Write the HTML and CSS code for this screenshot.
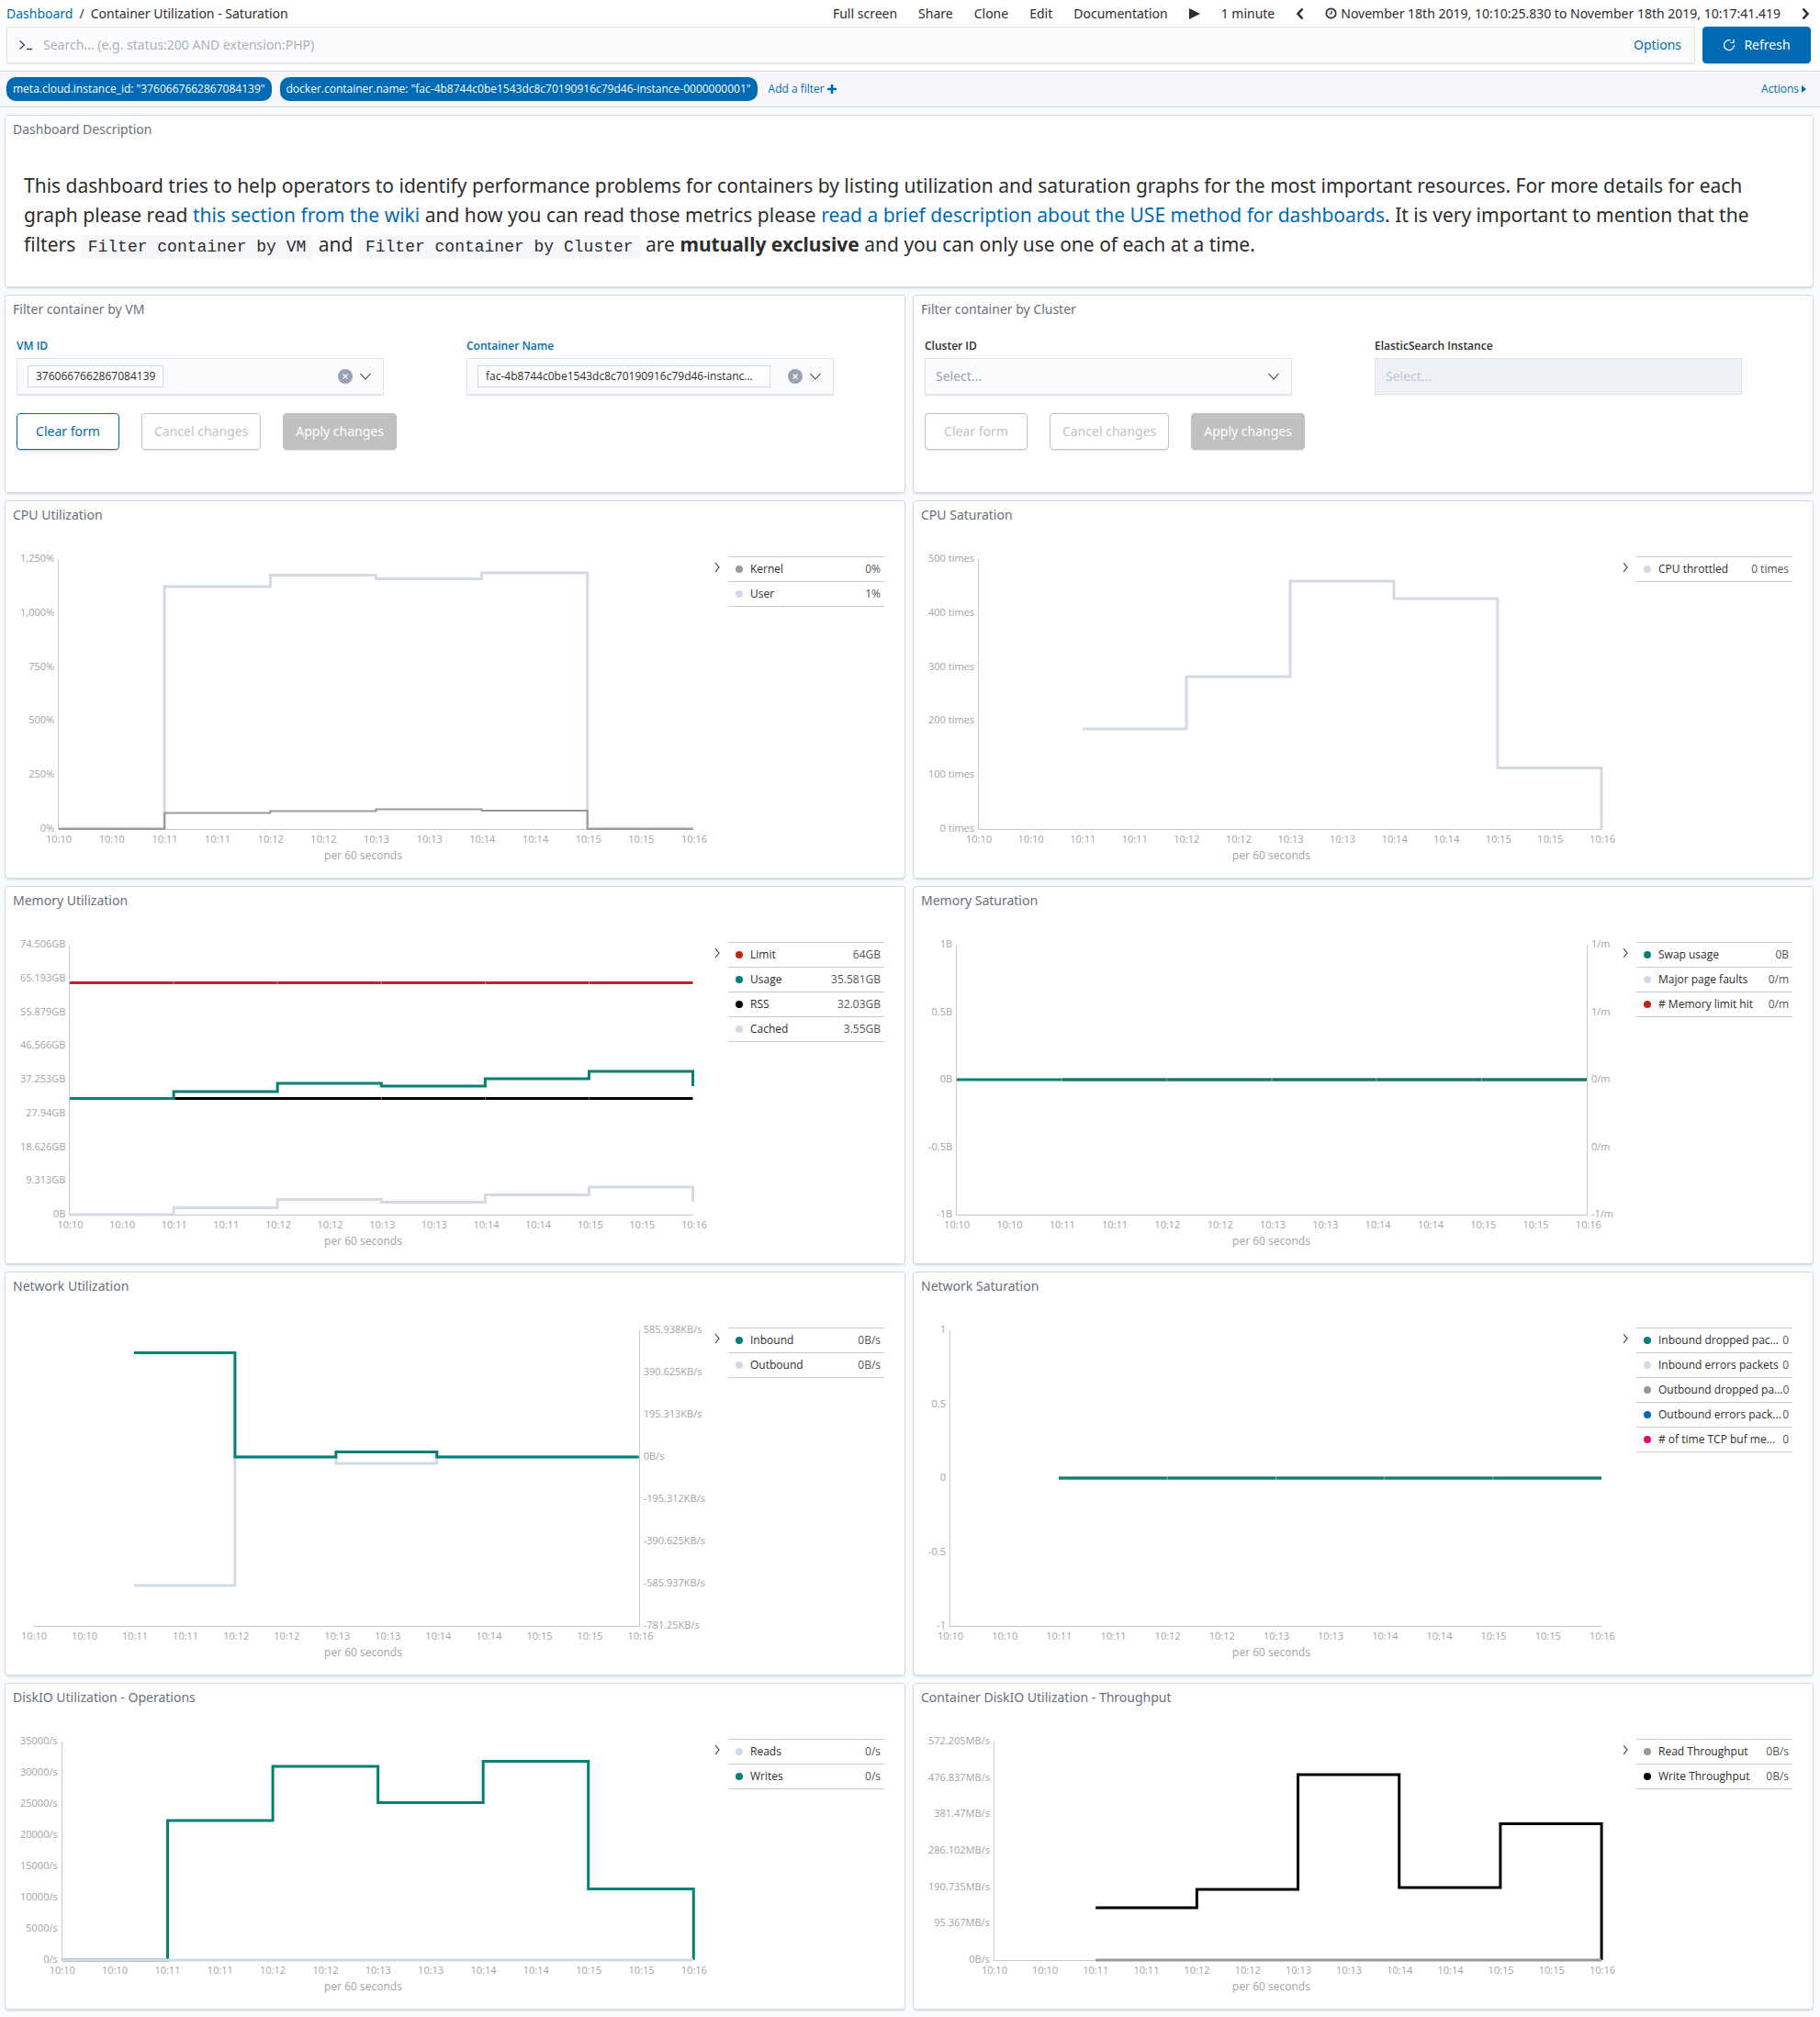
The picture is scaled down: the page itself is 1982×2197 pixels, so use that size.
FILE: index.html
```html
<!DOCTYPE html>
<html lang="en">
<head>
<meta charset="utf-8">
<title>Container Utilization - Saturation</title>
<link rel="stylesheet" href="styles.css">
</head>
<body>
<svg class="sprite" aria-hidden="true">
  <symbol id="i-down" viewBox="0 0 16 16"><path d="M2.500 5l5.500 6 5.500-6" fill="none" stroke="currentColor" stroke-width="1.100"/></symbol>
  <symbol id="i-next" viewBox="0 0 16 16"><path d="M6 3l4 5-4 5" fill="none" stroke="currentColor" stroke-width="1.100"/></symbol>
  <symbol id="i-clear" viewBox="0 0 16 16"><circle cx="8" cy="8" r="8" fill="#98a2b3"/><path d="M5.500 5.500l5 5m0-5l-5 5" stroke="#fff" stroke-width="1.200"/></symbol>
</svg>

<header class="topbar">
  <nav class="crumbs" aria-label="Breadcrumb"><a href="#">Dashboard</a><span>/</span><span>Container Utilization - Saturation</span></nav>
  <div class="menu">
    <button>Full screen</button>
    <button>Share</button>
    <button>Clone</button>
    <button>Edit</button>
    <button>Documentation</button>
    <button aria-label="Start auto refresh"><svg width="12" height="14" viewBox="0 0 12 14"><path d="M0 1l12 6-12 6z" fill="currentColor"/></svg></button>
    <button>1 minute</button>
    <button aria-label="Earlier"><svg width="9" height="14" viewBox="0 0 9 14"><path d="M7.500 1.500L2.500 7l5 5.500" fill="none" stroke="currentColor" stroke-width="2.600"/></svg></button>
    <button class="range"><svg width="13" height="13" viewBox="0 0 13 13" fill="none" stroke="currentColor"><circle cx="6.500" cy="6.500" r="5.200" stroke-width="1.700"/><path d="M7 3.500V7H4.500" stroke-width="1.200"/></svg>November 18th 2019, 10:10:25.830 to November 18th 2019, 10:17:41.419</button>
    <button aria-label="Later"><svg width="9" height="14" viewBox="0 0 9 14"><path d="M1.500 1.500l5 5.500-5 5.500" fill="none" stroke="currentColor" stroke-width="2.600"/></svg></button>
  </div>
</header>

<form class="query">
  <div class="query-box">
    <svg width="16" height="16" viewBox="0 0 16 16" fill="none" stroke="#343741"><path d="M1.500 3.500l5 4.500-5 4.500" stroke-width="1.200"/><path d="M9 12.500h6" stroke-width="1.400"/></svg>
    <input type="text" aria-label="Search" placeholder="Search... (e.g. status:200 AND extension:PHP)">
    <a href="#">Options</a>
  </div>
  <button type="button" class="btn btn-fill btn-refresh"><svg width="14" height="14" viewBox="0 0 14 14" fill="none" stroke="currentColor" stroke-width="1.200"><path d="M8.500 1.800A5.500 5.500 0 1 0 12.500 7M12 1v3.500H8.500"/></svg>Refresh</button>
</form>

<div class="filters">
  <span class="tag">meta.cloud.instance_id: "3760667662867084139"</span>
  <span class="tag">docker.container.name: "fac-4b8744c0be1543dc8c70190916c79d46-instance-0000000001"</span>
  <a href="#">Add a filter <svg width="10" height="10" viewBox="0 0 10 10"><path d="M5 0v10M0 5h10" stroke="currentColor" stroke-width="2.600"/></svg></a>
  <a href="#" class="actions">Actions<svg width="5" height="8" viewBox="0 0 5 8"><path d="M0 0l5 4-5 4z" fill="currentColor"/></svg></a>
</div>

<main class="grid">
  <section class="panel wide">
    <h2>Dashboard Description</h2>
    <p class="markdown">This dashboard tries to help operators to identify performance problems for containers by listing utilization and saturation graphs for the most important resources. For more details for each graph please read <a href="#">this section from the wiki</a> and how you can read those metrics please <a href="#">read a brief description about the USE method for dashboards</a>. It is very important to mention that the filters <code>Filter container by VM</code> and <code>Filter container by Cluster</code> are <strong>mutually exclusive</strong> and you can only use one of each at a time.</p>
  </section>

  <section class="panel">
    <h2>Filter container by VM</h2>
    <form class="controls">
      <div class="fields">
        <div class="field active">
          <label for="vm">VM ID</label>
          <div class="combo"><span class="pill">3760667662867084139</span><input id="vm" type="text"><button type="button" aria-label="Clear"><svg width="16" height="16"><use href="#i-clear"/></svg></button><button type="button" aria-label="Open list"><svg width="16" height="16"><use href="#i-down"/></svg></button></div>
        </div>
        <div class="field active">
          <label for="cn">Container Name</label>
          <div class="combo"><span class="pill long">fac-4b8744c0be1543dc8c70190916c79d46-instanc...</span><input id="cn" type="text"><button type="button" aria-label="Clear"><svg width="16" height="16"><use href="#i-clear"/></svg></button><button type="button" aria-label="Open list"><svg width="16" height="16"><use href="#i-down"/></svg></button></div>
        </div>
      </div>
      <div class="buttons"><button type="button" class="btn">Clear form</button><button type="button" class="btn" disabled>Cancel changes</button><button type="button" class="btn btn-fill" disabled>Apply changes</button></div>
    </form>
  </section>

  <section class="panel">
    <h2>Filter container by Cluster</h2>
    <form class="controls">
      <div class="fields">
        <div class="field">
          <label for="cl">Cluster ID</label>
          <div class="select"><select id="cl"><option>Select...</option></select><svg width="16" height="16"><use href="#i-down"/></svg></div>
        </div>
        <div class="field">
          <label for="es">ElasticSearch Instance</label>
          <div class="select"><select id="es" disabled><option>Select...</option></select></div>
        </div>
      </div>
      <div class="buttons"><button type="button" class="btn" disabled>Clear form</button><button type="button" class="btn" disabled>Cancel changes</button><button type="button" class="btn btn-fill" disabled>Apply changes</button></div>
    </form>
  </section>

  <section class="panel">
    <h2>CPU Utilization</h2>
    <div class="viz">
      <div class="chart">
        <div class="yaxis"><span>1,250%</span><span>1,000%</span><span>750%</span><span>500%</span><span>250%</span><span>0%</span></div>
        <svg class="plot axis-left" viewBox="0 0 600 294" preserveAspectRatio="none"><path class="light" d="M0 293H100V30H200V17.500H300V21.500H400V15H500V293H600"/><path class="gray thin" d="M0 294H100V276.500H200V274.500H300V272.500H400V274H500V294H600"/></svg>
        <div class="xaxis"><span>10:10</span><span>10:10</span><span>10:11</span><span>10:11</span><span>10:12</span><span>10:12</span><span>10:13</span><span>10:13</span><span>10:14</span><span>10:14</span><span>10:15</span><span>10:15</span><span>10:16</span></div>
        <div class="caption">per 60 seconds</div>
      </div>
      <button class="toggle" aria-label="Toggle legend"><svg width="16" height="16"><use href="#i-next"/></svg></button>
      <ul class="legend"><li class="c-gray"><span>Kernel</span><b>0%</b></li><li class="c-light"><span>User</span><b>1%</b></li></ul>
    </div>
  </section>

  <section class="panel">
    <h2>CPU Saturation</h2>
    <div class="viz">
      <div class="chart">
        <div class="yaxis"><span>500 times</span><span>400 times</span><span>300 times</span><span>200 times</span><span>100 times</span><span>0 times</span></div>
        <svg class="plot axis-left" viewBox="0 0 600 294" preserveAspectRatio="none"><path class="light" d="M100 185H200V128H300V24H400V43H500V227.500H600V294"/></svg>
        <div class="xaxis"><span>10:10</span><span>10:10</span><span>10:11</span><span>10:11</span><span>10:12</span><span>10:12</span><span>10:13</span><span>10:13</span><span>10:14</span><span>10:14</span><span>10:15</span><span>10:15</span><span>10:16</span></div>
        <div class="caption">per 60 seconds</div>
      </div>
      <button class="toggle" aria-label="Toggle legend"><svg width="16" height="16"><use href="#i-next"/></svg></button>
      <ul class="legend"><li class="c-light"><span>CPU throttled</span><b>0 times</b></li></ul>
    </div>
  </section>

  <section class="panel">
    <h2>Memory Utilization</h2>
    <div class="viz">
      <div class="chart">
        <div class="yaxis"><span>74.506GB</span><span>65.193GB</span><span>55.879GB</span><span>46.566GB</span><span>37.253GB</span><span>27.94GB</span><span>18.626GB</span><span>9.313GB</span><span>0B</span></div>
        <svg class="plot axis-left" viewBox="0 0 600 294" preserveAspectRatio="none"><path class="light" d="M0 294H100V286.500H200V277.500H300V280.500H400V272.500H500V264H600V280"/><path class="black" d="M0 167.500H600"/><path class="green" d="M0 167.500H100V160H200V151H300V154H400V146H500V138H600V154"/><path class="red" d="M0 41.500H600"/><path class="joint" d="M100 40v3m100-3v3m100-3v3m100-3v3m100-3v3M300 166v3m100-3v3m100-3v3"/></svg>
        <div class="xaxis"><span>10:10</span><span>10:10</span><span>10:11</span><span>10:11</span><span>10:12</span><span>10:12</span><span>10:13</span><span>10:13</span><span>10:14</span><span>10:14</span><span>10:15</span><span>10:15</span><span>10:16</span></div>
        <div class="caption">per 60 seconds</div>
      </div>
      <button class="toggle" aria-label="Toggle legend"><svg width="16" height="16"><use href="#i-next"/></svg></button>
      <ul class="legend"><li class="c-red"><span>Limit</span><b>64GB</b></li><li class="c-green"><span>Usage</span><b>35.581GB</b></li><li class="c-black"><span>RSS</span><b>32.03GB</b></li><li class="c-light"><span>Cached</span><b>3.55GB</b></li></ul>
    </div>
  </section>

  <section class="panel">
    <h2>Memory Saturation</h2>
    <div class="viz">
      <div class="chart">
        <div class="yaxis"><span>1B</span><span>0.5B</span><span>0B</span><span>-0.5B</span><span>-1B</span></div>
        <svg class="plot axis-left axis-right" viewBox="0 0 600 294" preserveAspectRatio="none"><path class="red" d="M100 147H600"/><path class="green" d="M0 147H600"/><path class="joint" d="M100 145v4m100-4v4m100-4v4m100-4v4m100-4v4"/></svg>
        <div class="yaxis right"><span>1/m</span><span>1/m</span><span>0/m</span><span>0/m</span><span>-1/m</span></div>
        <div class="xaxis"><span>10:10</span><span>10:10</span><span>10:11</span><span>10:11</span><span>10:12</span><span>10:12</span><span>10:13</span><span>10:13</span><span>10:14</span><span>10:14</span><span>10:15</span><span>10:15</span><span>10:16</span></div>
        <div class="caption">per 60 seconds</div>
      </div>
      <button class="toggle" aria-label="Toggle legend"><svg width="16" height="16"><use href="#i-next"/></svg></button>
      <ul class="legend"><li class="c-green"><span>Swap usage</span><b>0B</b></li><li class="c-light"><span>Major page faults</span><b>0/m</b></li><li class="c-red"><span># Memory limit hit</span><b>0/m</b></li></ul>
    </div>
  </section>

  <section class="panel">
    <h2>Network Utilization</h2>
    <div class="viz tall">
      <div class="chart">
        <svg class="plot axis-right" viewBox="0 0 600 322" preserveAspectRatio="none"><path class="light" d="M100 278H200V138H300V145H400V138H600"/><path class="green" d="M100 24.500H200V138H300V132.500H400V138H600"/></svg>
        <div class="yaxis right"><span>585.938KB/s</span><span>390.625KB/s</span><span>195.313KB/s</span><span>0B/s</span><span>-195.312KB/s</span><span>-390.625KB/s</span><span>-585.937KB/s</span><span>-781.25KB/s</span></div>
        <div class="xaxis"><span>10:10</span><span>10:10</span><span>10:11</span><span>10:11</span><span>10:12</span><span>10:12</span><span>10:13</span><span>10:13</span><span>10:14</span><span>10:14</span><span>10:15</span><span>10:15</span><span>10:16</span></div>
        <div class="caption">per 60 seconds</div>
      </div>
      <button class="toggle" aria-label="Toggle legend"><svg width="16" height="16"><use href="#i-next"/></svg></button>
      <ul class="legend"><li class="c-green"><span>Inbound</span><b>0B/s</b></li><li class="c-light"><span>Outbound</span><b>0B/s</b></li></ul>
    </div>
  </section>

  <section class="panel">
    <h2>Network Saturation</h2>
    <div class="viz tall">
      <div class="chart">
        <div class="yaxis"><span>1</span><span>0.5</span><span>0</span><span>-0.5</span><span>-1</span></div>
        <svg class="plot axis-left" viewBox="0 0 600 322" preserveAspectRatio="none"><path class="gray" d="M100 161H600"/><path class="green" d="M100 161H600"/><path class="joint" d="M200 159v4m100-4v4m100-4v4m100-4v4"/></svg>
        <div class="xaxis"><span>10:10</span><span>10:10</span><span>10:11</span><span>10:11</span><span>10:12</span><span>10:12</span><span>10:13</span><span>10:13</span><span>10:14</span><span>10:14</span><span>10:15</span><span>10:15</span><span>10:16</span></div>
        <div class="caption">per 60 seconds</div>
      </div>
      <button class="toggle" aria-label="Toggle legend"><svg width="16" height="16"><use href="#i-next"/></svg></button>
      <ul class="legend"><li class="c-green"><span>Inbound dropped pac...</span><b>0</b></li><li class="c-light"><span>Inbound errors packets</span><b>0</b></li><li class="c-gray"><span>Outbound dropped pa...</span><b>0</b></li><li class="c-blue"><span>Outbound errors pack...</span><b>0</b></li><li class="c-pink"><span># of time TCP buf me...</span><b>0</b></li></ul>
    </div>
  </section>

  <section class="panel">
    <h2>DiskIO Utilization - Operations</h2>
    <div class="viz short">
      <div class="chart">
        <div class="yaxis"><span>35000/s</span><span>30000/s</span><span>25000/s</span><span>20000/s</span><span>15000/s</span><span>10000/s</span><span>5000/s</span><span>0/s</span></div>
        <svg class="plot axis-left" viewBox="0 0 600 238" preserveAspectRatio="none"><path class="green" d="M0 238H100V86H200V27H300V66.500H400V21.500H500V160.500H600V238"/><path class="light" d="M0 238H600"/></svg>
        <div class="xaxis"><span>10:10</span><span>10:10</span><span>10:11</span><span>10:11</span><span>10:12</span><span>10:12</span><span>10:13</span><span>10:13</span><span>10:14</span><span>10:14</span><span>10:15</span><span>10:15</span><span>10:16</span></div>
        <div class="caption">per 60 seconds</div>
      </div>
      <button class="toggle" aria-label="Toggle legend"><svg width="16" height="16"><use href="#i-next"/></svg></button>
      <ul class="legend"><li class="c-light"><span>Reads</span><b>0/s</b></li><li class="c-green"><span>Writes</span><b>0/s</b></li></ul>
    </div>
  </section>

  <section class="panel">
    <h2>Container DiskIO Utilization - Throughput</h2>
    <div class="viz short">
      <div class="chart">
        <div class="yaxis"><span>572.205MB/s</span><span>476.837MB/s</span><span>381.47MB/s</span><span>286.102MB/s</span><span>190.735MB/s</span><span>95.367MB/s</span><span>0B/s</span></div>
        <svg class="plot axis-left" viewBox="0 0 600 238" preserveAspectRatio="none"><path class="black" d="M100 181H200V161H300V36H400V159H500V89.500H600V238"/><path class="gray" d="M100 238H600"/></svg>
        <div class="xaxis"><span>10:10</span><span>10:10</span><span>10:11</span><span>10:11</span><span>10:12</span><span>10:12</span><span>10:13</span><span>10:13</span><span>10:14</span><span>10:14</span><span>10:15</span><span>10:15</span><span>10:16</span></div>
        <div class="caption">per 60 seconds</div>
      </div>
      <button class="toggle" aria-label="Toggle legend"><svg width="16" height="16"><use href="#i-next"/></svg></button>
      <ul class="legend"><li class="c-gray"><span>Read Throughput</span><b>0B/s</b></li><li class="c-black"><span>Write Throughput</span><b>0B/s</b></li></ul>
    </div>
  </section>
</main>
</body>
</html>
```
FILE: styles.css
```css
* { box-sizing: border-box; }

:root { --small-font: "Open Sans", "Noto Sans", sans-serif; }

body {
  margin: 0;
  background: #fafbfd;
  color: #2d2d2d;
  font: 14px/20px "Noto Sans", "Open Sans", sans-serif;
}

a { color: #006bb4; text-decoration: none; }
button, input, select { font: inherit; color: inherit; }
button { padding: 0; border: 0; background: none; }
svg { display: block; flex: none; }
.sprite { display: none; }

/* Top bar */
.topbar {
  display: flex;
  justify-content: space-between;
  align-items: center;
  height: 29px;
  padding: 0 11px 0 7px;
  background: #fff;
}
.crumbs { display: flex; gap: 7px; }
.menu { display: flex; align-items: center; gap: 23px; }
.range { display: flex; align-items: center; gap: 4px; }

.query {
  display: flex;
  gap: 8px;
  padding: 0 10px 8px 7px;
  background: #fff;
}
.query-box {
  flex: 1;
  display: flex;
  align-items: center;
  gap: 11px;
  height: 40px;
  padding: 0 14px 0 12px;
  border: 1px solid #dfe1e5;
  background: #fbfcfd;
  box-shadow: 0 2px 2px -1px rgba(152, 162, 179, .3);
}
.query-box input {
  flex: 1;
  padding: 0;
  border: 0;
  outline: 0;
  background: none;
}
.query-box input::placeholder { color: #adb0b6; opacity: 1; }

.btn {
  min-width: 112px;
  height: 40px;
  padding: 0 13px;
  border: 1px solid #006bb4;
  border-radius: 4px;
  background: #fff;
  color: #006bb4;
  box-shadow: 0 2px 2px -1px rgba(54, 97, 126, .3);
}
.btn-fill { background: #006bb4; color: #fff; }
.btn:disabled { border-color: #c2c3c6; color: #c2c3c6; box-shadow: 0 2px 2px -1px rgba(152, 162, 179, .3); }
.btn-fill:disabled { border-color: #c0c0c0; background: #c0c0c0; color: #fff; }
.btn-refresh { display: flex; align-items: center; justify-content: center; gap: 9px; width: 118px; }

.filters {
  display: flex;
  align-items: center;
  gap: 9px;
  height: 40px;
  padding: 0 15px 0 7px;
  border: solid #d3dae6;
  border-width: 1px 0;
  background: #f5f7fa;
  font-family: var(--small-font);
  font-size: 12px;
}
.filters a { display: flex; align-items: center; gap: 3px; }
.filters .tag + a { margin-left: 3px; }
.filters .actions { margin-left: auto; }
.tag {
  padding: 3px 7px;
  border-radius: 10px;
  background: #006bb4;
  color: #fff;
}

/* Dashboard panels */
.grid {
  display: grid;
  grid-template-columns: 1fr 1fr;
  gap: 8px;
  padding: 8px 7px 8px 5px;
}
.wide { grid-column: 1 / -1; }
.panel {
  min-width: 0;
  border: 1px solid #d3dae6;
  border-radius: 4px;
  background: #fff;
  box-shadow: 0 2px 2px -1px rgba(152, 162, 179, .3), 0 1px 5px -2px rgba(152, 162, 179, .3);
}
.panel h2 {
  margin: 0;
  padding: 5px 8px 0;
  color: #69707d;
  font-size: 14px;
  font-weight: 400;
  line-height: 20px;
}

.markdown {
  margin: 0;
  padding: 35px 20px 30px;
  font-size: 21px;
  line-height: 32px;
}
.markdown code {
  padding: 3px 8px;
  border-radius: 4px;
  background: #f5f7fa;
  font: 18px "Liberation Mono", monospace;
}

/* Filter forms */
.controls { padding: 20px 12px 46px; }
.fields { display: flex; gap: 90px; }
.field { width: 400px; }
.field label {
  display: block;
  margin-bottom: 3px;
  font-family: var(--small-font);
  font-size: 12px;
  font-weight: 600;
}
.active label { color: #006bb4; }
.combo, .select select {
  width: 100%;
  height: 40px;
  border: 1px solid #dfe1e5;
  border-radius: 0;
  background: #fbfcfd;
  box-shadow: 0 2px 2px -1px rgba(152, 162, 179, .3);
}
.combo { display: flex; align-items: center; gap: 6px; padding: 0 11px; }
.combo input { flex: 1; width: 0; padding: 0; border: 0; outline: 0; background: none; }
.pill {
  padding: 1px 8px;
  border: 1px solid #d3dae6;
  background: #fff;
  font-family: var(--small-font);
  font-size: 12px;
  font-weight: 500;
}
.pill.long { width: 319px; white-space: nowrap; }
.select { display: grid; align-items: center; }
.select > * { grid-area: 1 / 1; }
.select select { padding: 0 11px; appearance: none; color: #98a2b3; opacity: 1; }
.select select:disabled { background: #eef1f6; color: #c2c8d2; box-shadow: none; }
.select svg { justify-self: end; margin-right: 12px; pointer-events: none; }
.buttons { display: flex; gap: 24px; margin-top: 20px; }

/* Charts */
.viz {
  --plot: 294px;
  display: flex;
  align-items: flex-start;
  padding: 35px 22px 18px 17px;
}
.viz.tall { --plot: 322px; }
.viz.short { --plot: 238px; }
.chart {
  flex: 1;
  min-width: 0;
  display: grid;
  grid-template-columns: minmax(13px, auto) 1fr minmax(13px, auto);
  grid-template-rows: calc(var(--plot) + 3px) 17px 18px;
  color: #a3a3a3;
  font-family: var(--small-font);
  font-size: 11px;
  line-height: 16px;
}
.yaxis {
  grid-area: 1 / 1;
  display: flex;
  flex-direction: column;
  justify-content: space-between;
  margin: -6px 4px -7px -1px;
  text-align: right;
}
.yaxis.right { grid-column: 3; margin-left: 4px; margin-right: 0; text-align: left; }
.plot {
  grid-area: 1 / 2;
  width: 100%;
  height: calc(var(--plot) + 1px);
  margin-top: 3px;
  border-bottom: 1px solid #c9c9c9;
  overflow: visible;
}
.axis-left { border-left: 1px solid #c9c9c9; }
.axis-right { border-right: 1px solid #c9c9c9; }
.plot path { fill: none; stroke-width: 3; vector-effect: non-scaling-stroke; }
.plot .thin { stroke-width: 2; }
.plot .joint { stroke: #fff; stroke-opacity: .4; stroke-width: 1; }
.light { stroke: #d3dae6; }
.gray { stroke: #999; }
.black { stroke: #000; }
.green { stroke: #018075; }
.red { stroke: #bf241d; }
.xaxis {
  grid-area: 2 / 2;
  display: flex;
  justify-content: space-between;
  margin: 3px -16px 0 -14px;
}
.xaxis span { width: 30px; text-align: center; }
.caption { grid-area: 3 / 1 / auto / -1; padding-top: 4px; font-size: 12px; text-align: center; }

.toggle { margin: 4px 4px 0 5px; color: #343741; }
.legend {
  width: 170px;
  margin: 0;
  padding: 0;
  border-top: 1px solid #c9c9c9;
  list-style: none;
  font-family: var(--small-font);
  font-size: 12px;
}
.legend li {
  display: flex;
  align-items: center;
  height: 27px;
  padding: 0 4px 0 8px;
  border-bottom: 1px solid #c9c9c9;
  white-space: nowrap;
}
.legend li::before {
  content: "";
  flex: none;
  width: 8px;
  height: 8px;
  margin-right: 8px;
  border-radius: 50%;
  background: var(--c);
}
.legend b { margin-left: auto; color: #555; font-weight: 400; }
.c-light { --c: #d3dae6; }
.c-gray { --c: #999; }
.c-black { --c: #000; }
.c-green { --c: #018075; }
.c-red { --c: #bf241d; }
.c-blue { --c: #006bb4; }
.c-pink { --c: #dd0a73; }
```
